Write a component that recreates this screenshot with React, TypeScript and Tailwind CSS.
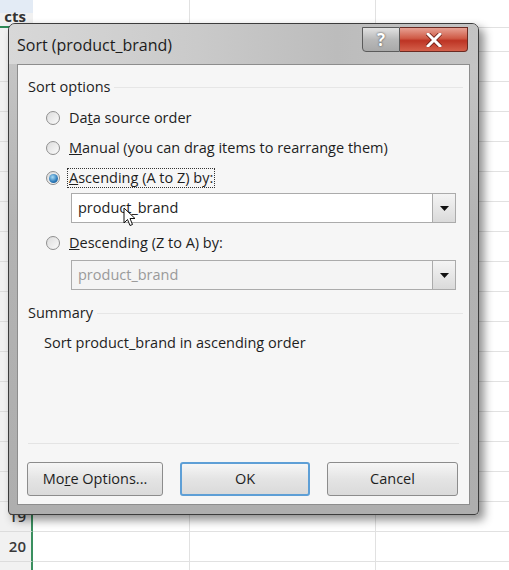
import React from 'react';

const ROWS = Array.from({ length: 18 }, (_, i) => i + 4);

function Radio({ checked }: { checked?: boolean }) {
    return (
        <span className="w-[14px] h-[14px] rounded-full border border-[#8f8f8f] bg-[linear-gradient(135deg,#dcdcdc,#fbfbfb)] flex items-center justify-center shrink-0">
            {checked && (
                <span className="w-[9px] h-[9px] rounded-full bg-[radial-gradient(circle_at_40%_35%,#a9dcf5,#2a78b8_60%,#0e3f6e)]" />
            )}
        </span>
    );
}

function Combo({ value, disabled }: { value: string; disabled?: boolean }) {
    return (
        <div className={`ml-[53px] mr-[13px] h-[30px] flex border border-[#ababab] ${disabled ? 'bg-[#f4f4f4]' : 'bg-white'}`}>
            <div className={`flex-1 flex items-center pl-[6px] ${disabled ? 'text-[#9a9a9a]' : 'text-[#1e1e1e]'}`}>{value}</div>
            <div className="w-[23px] border-l border-[#ababab] bg-[linear-gradient(#f4f4f4,#dadada)] flex items-center justify-center">
                <svg width="9" height="5" viewBox="0 0 9 5">
                    <path d="M0 0h9L4.5 5z" fill="#111" />
                </svg>
            </div>
        </div>
    );
}

function Btn({ label, w, primary }: { label: React.ReactNode; w: string; primary?: boolean }) {
    return (
        <div
            className={`${w} h-[34px] rounded-[3px] flex items-center justify-center text-[#1e1e1e] bg-[linear-gradient(#f6f6f6,#e4e4e4_50%,#dadada)] ${
                primary ? 'border-2 border-[#5e9fd6]' : 'border border-[#8c8c8c]'
            }`}
        >
            {label}
        </div>
    );
}

export default function App() {
    return (
        <div className="relative w-[509px] h-[570px] overflow-hidden bg-white font-['Open_Sans',sans-serif]">
            {/* spreadsheet behind the dialog */}
            <div className="flex flex-col">
                <div className="h-[28px] flex">
                    <div className="w-[33px] bg-[linear-gradient(#e3ebf5_13px,#f1f1f1_13px)] flex items-end justify-end pr-[7px] pb-[2px] text-[15px] font-bold leading-[15px] text-[#333] border-b-2 border-[#2f8a55]">
                        cts
                    </div>
                    <div className="w-[157px] border-r border-b border-[#e1e1e1]" />
                    <div className="w-[186px] border-r border-b border-[#e1e1e1]" />
                    <div className="flex-1 border-b border-[#e1e1e1]" />
                </div>
                <div className="h-[24px] flex">
                    <div className="w-[33px] bg-[#f1f1f1] border-r-2 border-[#3a8f5f]" />
                    <div className="w-[157px] border-r border-b border-[#e1e1e1]" />
                    <div className="w-[186px] border-r border-b border-[#e1e1e1]" />
                    <div className="flex-1 border-b border-[#e1e1e1]" />
                </div>
                {ROWS.map((n) => (
                    <div key={n} className="h-[30px] flex">
                        <div className="w-[33px] bg-[#f1f1f1] border-r-2 border-[#3a8f5f] border-b border-b-[#dcdcdc] flex items-center justify-end pr-[5px] text-[15px] font-semibold text-[#3a3a3a]">
                            {n}
                        </div>
                        <div className="w-[157px] border-r border-b border-[#e1e1e1]" />
                        <div className="w-[186px] border-r border-b border-[#e1e1e1]" />
                        <div className="flex-1 border-b border-[#e1e1e1]" />
                    </div>
                ))}
            </div>

            {/* dialog window */}
            <div className="absolute left-[8px] top-[23px] w-[471px] h-[492px] flex flex-col rounded-t-[7px] rounded-b-[4px] border border-[#3c3c3c] bg-[linear-gradient(#c9c9c9,#b3b3b3_40%,#aeaeae)] shadow-[5px_5px_10px_rgba(0,0,0,0.45)]">
                <div className="h-[40px] flex items-start rounded-t-[6px] bg-[linear-gradient(90deg,#d8d8d8,#cacaca_40%,#bcbcbc_70%,#c4c4c4)]">
                    <div className="pl-[8px] pt-[11px] text-[16px] leading-[20px] text-[#1c1c1c]">Sort (product_brand)</div>
                    <div className="ml-auto mr-[10px] mt-[3px] flex">
                        <div className="w-[38px] h-[25px] rounded-bl-[4px] border border-[#5b5b5b] bg-[linear-gradient(#e2e2e2,#b9b9b9_50%,#a9a9a9)] flex items-center justify-center text-[17px] font-bold text-white [text-shadow:0_0_2px_#333]">
                            ?
                        </div>
                        <div className="w-[68px] h-[25px] rounded-br-[4px] border border-l-0 border-[#6a2a22] bg-[linear-gradient(#e7a193,#cf5a46_45%,#bd3424_55%,#d4604b)] flex items-center justify-center">
                            <svg width="16" height="14" viewBox="0 0 16 14">
                                <path d="M2 1l12 12M14 1L2 13" stroke="#6b1c14" strokeWidth="4.5" strokeLinecap="square" />
                                <path d="M2 1l12 12M14 1L2 13" stroke="#fff" strokeWidth="3" strokeLinecap="square" />
                            </svg>
                        </div>
                    </div>
                </div>

                <div className="mx-[8px] h-[441px] border border-[#8d8d8d] bg-[#f6f6f6] flex flex-col text-[14.5px] leading-[18px] text-[#1e1e1e]">
                    <div className="mt-[13px] pl-[10px] pr-[6px] flex items-center gap-[4px]">
                        <span>Sort options</span>
                        <span className="flex-1 border-t border-[#e6e6e6]" />
                    </div>

                    <div className="mt-[7px] h-[30px] pl-[28px] flex items-center gap-[9px]">
                        <Radio />
                        <span>
                            Da<u>t</u>a source order
                        </span>
                    </div>
                    <div className="h-[30px] pl-[28px] flex items-center gap-[9px]">
                        <Radio />
                        <span>
                            <u>M</u>anual (you can drag items to rearrange them)
                        </span>
                    </div>
                    <div className="h-[30px] pl-[28px] flex items-center gap-[7px]">
                        <Radio checked />
                        <span className="border border-dotted border-[#333] px-[1px]">
                            <u>A</u>scending (A to Z) by:
                        </span>
                    </div>
                    <Combo value="product_brand" />

                    <div className="mt-[5px] h-[30px] pl-[28px] flex items-center gap-[9px]">
                        <Radio />
                        <span>
                            <u>D</u>escending (Z to A) by:
                        </span>
                    </div>
                    <div className="mt-[2px]">
                        <Combo value="product_brand" disabled />
                    </div>

                    <div className="mt-[14px] pl-[10px] pr-[6px] flex items-center gap-[4px]">
                        <span>Summary</span>
                        <span className="flex-1 border-t border-[#e6e6e6]" />
                    </div>
                    <div className="mt-[12px] pl-[26px]">Sort product_brand in ascending order</div>

                    <div className="flex-1" />
                    <div className="mx-[10px] border-t border-[#e4e4e4]" />
                    <div className="mt-[18px] mb-[8px] pl-[9px] flex gap-[17px]">
                        <Btn
                            w="w-[136px]"
                            label={
                                <span>
                                    Mo<u>r</u>e Options...
                                </span>
                            }
                        />
                        <Btn w="w-[130px]" label="OK" primary />
                        <Btn w="w-[131px]" label="Cancel" />
                    </div>
                </div>
            </div>

            {/* mouse pointer */}
            <svg className="absolute left-[123px] top-[207px]" width="13" height="20" viewBox="0 0 13 20">
                <path d="M1 1v15l3.5-3.5 2.5 6 2.5-1-2.5-6H12z" fill="#fff" stroke="#111" strokeWidth="1" strokeLinejoin="round" />
            </svg>
        </div>
    );
}
